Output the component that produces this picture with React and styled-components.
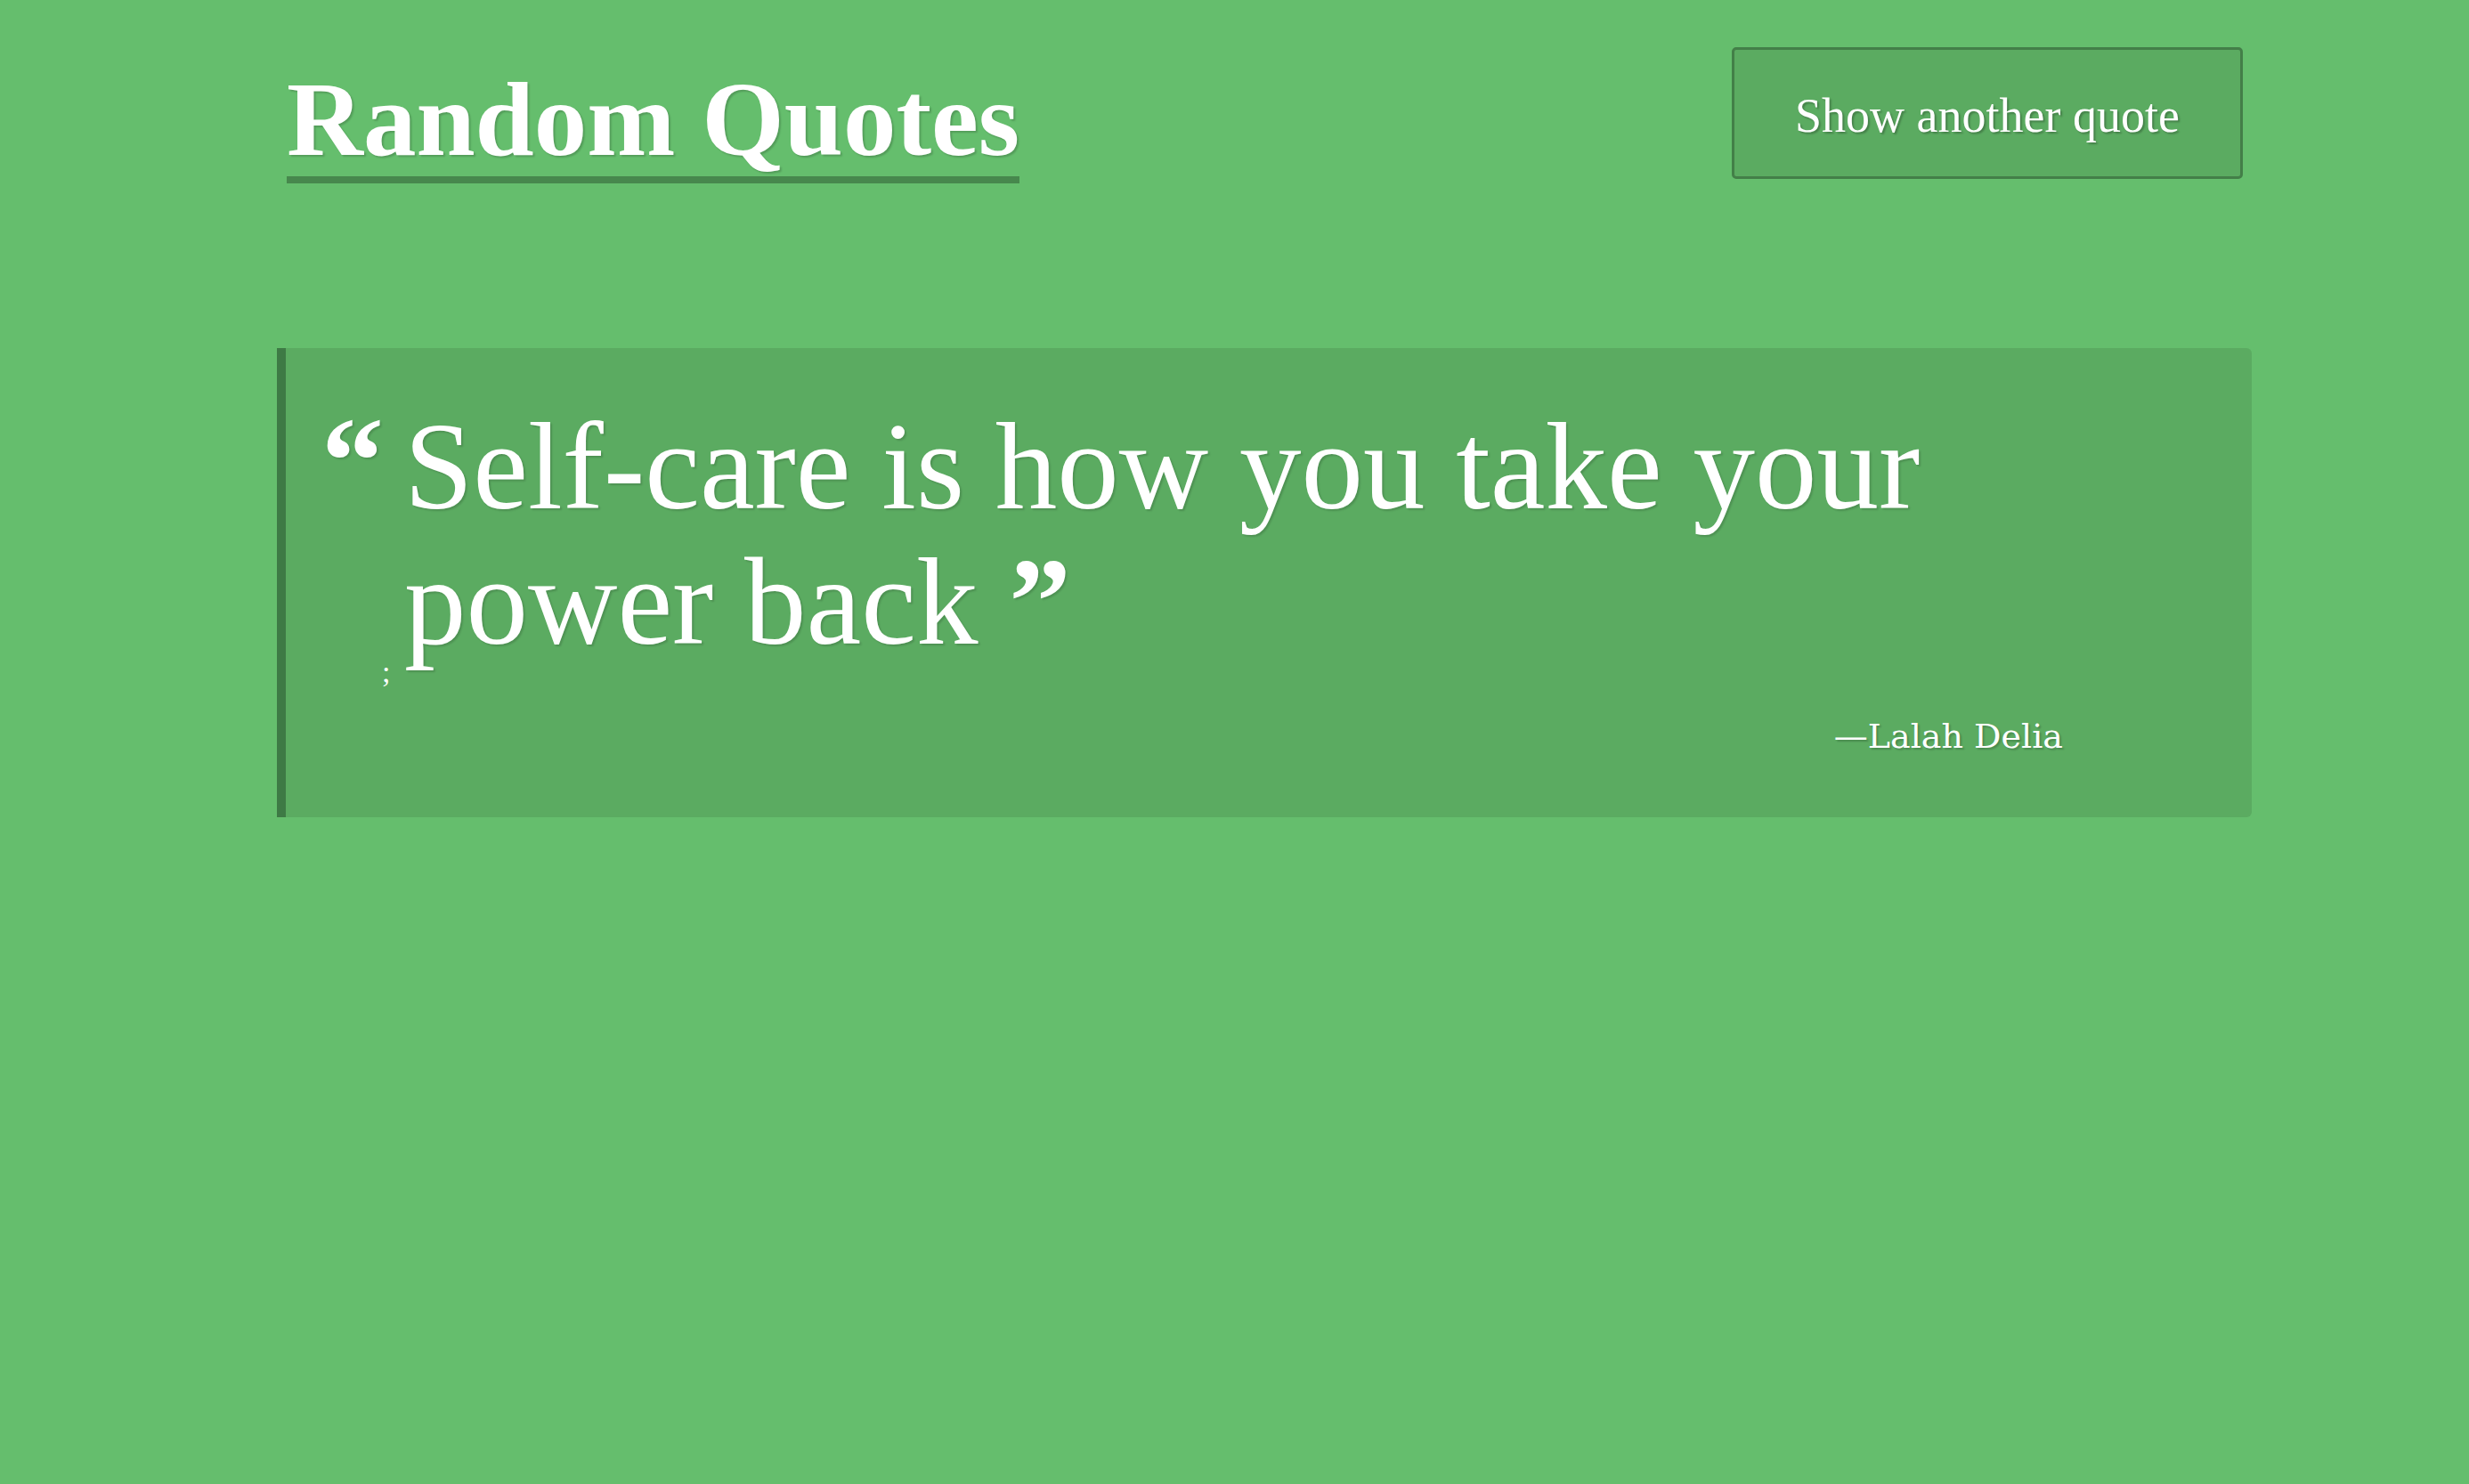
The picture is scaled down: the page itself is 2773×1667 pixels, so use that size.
import styled, { createGlobalStyle } from "styled-components";

const GlobalStyle = createGlobalStyle`
  html, body {
    margin: 0;
    padding: 0;
    background-color: #65be6d;
    min-height: 100%;
  }
  body {
    font-family: "Liberation Serif", "Times New Roman", serif;
    color: #ffffff;
  }
`;

const Page = styled.main`
  width: 2218px;
  margin-left: 311px;
  min-height: 1667px;
`;

const Header = styled.header`
  display: flex;
  justify-content: space-between;
  align-items: flex-start;
  padding-top: 53px;
  padding-right: 10px;
`;

const Title = styled.h1`
  display: inline-block;
  margin: 17px 0 0 11px;
  font-family: "Liberation Serif", "Times New Roman", serif;
  font-weight: 700;
  font-size: 119px;
  line-height: 128px;
  border-bottom: 8px solid #47884d;
  text-shadow: 2px 2px 2px rgba(0, 0, 0, 0.18);
`;

const NextButton = styled.button`
  box-sizing: border-box;
  display: flex;
  align-items: center;
  justify-content: center;
  width: 574px;
  height: 148px;
  padding: 6px 0 0;
  background-color: #5bab61;
  border: 3px solid #437f48;
  border-radius: 5px;
  color: #ffffff;
  font-family: "Liberation Serif", "Times New Roman", serif;
  font-size: 54px;
  line-height: 62px;
  text-shadow: 2px 2px 2px rgba(0, 0, 0, 0.25);
  cursor: pointer;

  &:hover {
    background-color: #54a25a;
  }
`;

const QuoteBox = styled.blockquote`
  display: flex;
  margin: 185px 0 0;
  padding: 57px 212px 68px 40px;
  background-color: #5bab61;
  border-left: 10px solid #3e7a45;
  border-radius: 0 6px 6px 0;
`;

const MarkColumn = styled.div`
  display: flex;
  flex-direction: column;
  width: 93px;
  flex-shrink: 0;
`;

const OpenMark = styled.span`
  font-family: "Liberation Serif", "Times New Roman", serif;
  font-weight: 700;
  font-size: 140px;
  line-height: 140px;
  text-shadow: 2px 2px 2px rgba(0, 0, 0, 0.15);
`;

const Stray = styled.span`
  margin: 147px 0 0 68px;
  font-size: 34px;
  line-height: 40px;
`;

const Body = styled.div`
  flex: 1;
  display: flex;
  flex-direction: column;
`;

const QuoteText = styled.p`
  margin: 0;
  font-family: "Liberation Serif", "Times New Roman", serif;
  font-size: 139px;
  line-height: 152px;
  text-shadow: 2px 2px 2px rgba(0, 0, 0, 0.15);
`;

const CloseMark = styled.b`
  font-weight: 700;
`;

const Cite = styled.cite`
  align-self: flex-end;
  margin-top: 52px;
  font-style: normal;
  font-family: "DejaVu Serif", "Liberation Serif", serif;
  font-size: 38px;
  line-height: 46px;
  text-shadow: 2px 2px 2px rgba(0, 0, 0, 0.2);
`;

export default function App() {
  const quote = {
    text: "Self-care is how you take your power back",
    author: "Lalah Delia",
  };

  return (
    <>
      <GlobalStyle />
      <Page>
        <Header>
          <Title>Random Quotes</Title>
          <NextButton type="button">Show another quote</NextButton>
        </Header>
        <QuoteBox>
          <MarkColumn>
            <OpenMark>“</OpenMark>
            <Stray>;</Stray>
          </MarkColumn>
          <Body>
            <QuoteText>
              {quote.text} <CloseMark>”</CloseMark>
            </QuoteText>
            <Cite>—{quote.author}</Cite>
          </Body>
        </QuoteBox>
      </Page>
    </>
  );
}
